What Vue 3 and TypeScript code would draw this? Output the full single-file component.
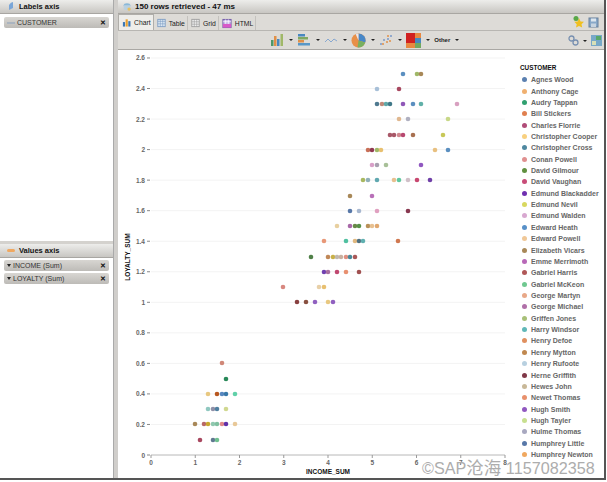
<script setup lang="ts">
type D = [number, string]
const rows: [number, D[]][] = [
  [74, [[403,'#5b8fc0'],[417,'#a0b868'],[421,'#a88858']]],
  [89, [[377,'#a8c0d8'],[399,'#a84860']]],
  [104, [[377,'#4f7a90'],[382,'#c08878'],[386,'#60a8a8'],[390,'#407888'],[403,'#9058b8'],[413,'#5b8fc0'],[421,'#60b0a8'],[457,'#d8a0c0']]],
  [119, [[399,'#e0b890'],[408,'#b0b0c0'],[448,'#c8d888']]],
  [135, [[390,'#a85868'],[394,'#a85868'],[399,'#d08890'],[403,'#b84870'],[413,'#a87050'],[443,'#c8c858']]],
  [150, [[368,'#c87058'],[372,'#903850'],[377,'#a0b868'],[381,'#e8c070'],[435,'#e8c080'],[448,'#5b8fc0']]],
  [165, [[372,'#d8a0c8'],[377,'#a8a0b0'],[386,'#a8c098'],[421,'#9058c0']]],
  [180, [[363,'#a8b860'],[368,'#90b0b8'],[377,'#60a8b0'],[394,'#e8c090'],[399,'#60c8a0'],[408,'#d0c0c8'],[417,'#c84870'],[430,'#7040a8']]],
  [196, [[350,'#a88858'],[372,'#b870b8']]],
  [211, [[350,'#5878a8'],[359,'#a8b8d0'],[377,'#e0a0c0'],[408,'#883850']]],
  [226, [[337,'#e8d0a0'],[350,'#a868a8'],[355,'#688848'],[359,'#589048'],[368,'#b89058'],[372,'#e8c090'],[377,'#e0a870']]],
  [241, [[324,'#e89878'],[346,'#50c0a0'],[355,'#e0b880'],[359,'#507080'],[363,'#60b0b0'],[398,'#d07850']]],
  [257, [[311,'#508048'],[328,'#c08858'],[333,'#c8b048'],[337,'#c0b8b0'],[341,'#c8b0a0'],[346,'#e09080'],[350,'#488898'],[355,'#a85858']]],
  [272, [[324,'#7040b0'],[328,'#a870a0'],[337,'#c04870'],[346,'#e89070'],[359,'#a05050']]],
  [287, [[283,'#d88880'],[319,'#e8d0a8'],[324,'#e8c070']]],
  [302, [[297,'#884040'],[306,'#885040'],[315,'#9060c0'],[328,'#e8c880'],[333,'#9060c0']]],
  [363, [[222,'#d08878']]],
  [379, [[226,'#288858']]],
  [394, [[208,'#e8c880'],[217,'#b85820'],[222,'#5888c0'],[226,'#3878a8'],[235,'#60d0a8']]],
  [409, [[208,'#90c8c0'],[213,'#9090a8'],[217,'#5080a0'],[226,'#d0d890']]],
  [424, [[195,'#a88858'],[204,'#b86868'],[208,'#c8a830'],[213,'#90c8b0'],[217,'#80c0a0'],[222,'#e08888'],[226,'#6030a8'],[235,'#e8c898']]],
  [440, [[200,'#a84860'],[213,'#607890'],[217,'#70c090']]],
]
const dots = rows.flatMap(([y, ds]) => ds.map(([x, c]) => ({ x, y, c })))
const yTicks = Array.from({ length: 13 }, (_, i) => {
  const v = (13 - i) * 0.2
  const t = v.toFixed(1).replace(/\.0$/, '')
  return { t, y: 455 - (13 - i) * 30.54 }
})
const xTicks = [0, 1, 2, 3, 4, 5, 6, 7, 8].map((v) => ({ t: String(v), x: 151 + v * 44.25 }))
const legend: [string, string][] = [
  ['Agnes Wood','#5b80b0'],['Anthony Cage','#f0b070'],['Audry Tappan','#30a070'],['Bill Stickers','#e08050'],
  ['Charles Florrie','#b04c78'],['Christopher Cooper','#f8d080'],['Christopher Cross','#4f88a0'],['Conan Powell','#e09090'],
  ['David Gilmour','#609040'],['David Vaughan','#c84c78'],['Edmund Blackadder','#7030b0'],['Edmund Nevil','#d8d860'],
  ['Edmund Walden','#d8a8d0'],['Edward Heath','#5890c8'],['Edward Powell','#f0c898'],['Elizabeth Vicars','#a88858'],
  ['Emme Merrimoth','#b868b8'],['Gabriel Harris','#b05858'],['Gabriel McKeon','#70c890'],['George Martyn','#e8a888'],
  ['George Michael','#b070a8'],['Griffen Jones','#a8c078'],['Harry Windsor','#60b8b8'],['Henry Defoe','#e09060'],
  ['Henry Mytton','#c08850'],['Henry Rufoote','#b8d0e0'],['Herne Griffith','#803848'],['Hewes John','#c8b898'],
  ['Newet Thomas','#e8906c'],['Hugh Smith','#9058c0'],['Hugh Tayler','#c8e090'],['Hulme Thomas','#a8a8c0'],
  ['Humphrey Little','#5878a8'],['Humphrey Newton','#f0a860'],
]
</script>

<template>
  <div class="root">
    <div class="window">
      <aside class="left">
        <section class="labels">
          <header class="phead">
            <svg width="10" height="12" viewBox="0 0 10 12"><path d="M3 9 L3 4 Q5 1 7 1 L7 7 Q5 8 3 9Z" fill="#7aa6d8" /></svg>
            <b>Labels axis</b>
          </header>
          <div class="chip"><span class="dash"></span><span class="chiptext">CUSTOMER</span><span class="x">✕</span></div>
        </section>
        <div class="hsplit"></div>
        <section class="values">
          <header class="phead">
            <svg width="10" height="12" viewBox="0 0 10 12"><rect x="1" y="4" width="8" height="3" rx="1.5" fill="#f0a860" /></svg>
            <b>Values axis</b>
          </header>
          <div class="chip"><span class="tri"></span><span class="chiptext">INCOME (Sum)</span><span class="x">✕</span></div>
          <div class="chip"><span class="tri"></span><span class="chiptext">LOYALTY (Sum)</span><span class="x">✕</span></div>
        </section>
      </aside>
      <div class="vsplit"></div>
      <main class="right">
        <header class="phead rhead">
          <svg width="10" height="12" viewBox="0 0 12 12"><ellipse cx="6" cy="4" rx="4" ry="2.4" fill="#8ab8d8" /><path d="M2 4v4c0 2 8 2 8 0V4" fill="#b8d0e0" /><circle cx="8.5" cy="8.5" r="2" fill="#e8c060" /></svg>
          <b>150 rows retrieved - 47 ms</b>
        </header>
        <nav class="tabs">
          <div class="tab active">
            <svg width="9" height="11" viewBox="0 0 10 11"><rect x="1" y="5" width="2.4" height="5" fill="#3a78b8" /><rect x="4" y="2" width="2.4" height="8" fill="#e8a030" /><rect x="7" y="4" width="2.4" height="6" fill="#3a78b8" /></svg>
            Chart
          </div>
          <div class="tab">
            <svg width="9" height="10" viewBox="0 0 11 11"><rect x="1" y="1" width="9" height="9" fill="#dce8f4" stroke="#7898c0" /><path d="M1 3.5h9M4 1v9M7 1v9M1 6.500h9" stroke="#7898c0" stroke-width=".7" /></svg>
            Table
          </div>
          <div class="tab">
            <svg width="9" height="10" viewBox="0 0 11 11"><rect x="1" y="1" width="9" height="9" fill="#eee" stroke="#999" /><path d="M1 4h9M1 7h9M4 1v9M7 1v9" stroke="#999" stroke-width=".7" /></svg>
            Grid
          </div>
          <div class="tab">
            <svg width="10" height="11" viewBox="0 0 11 11"><rect x="1" y="1" width="9" height="9" fill="#c8b8e8" stroke="#7058a8" /><rect x="1" y="6" width="9" height="4" fill="#d858c8" /><path d="M1 3.500h9M4 1v5M7 1v5" stroke="#fff" stroke-width=".7" /></svg>
            HTML
          </div>
          <div class="spacer"></div>
          <svg class="ti" width="13" height="13" viewBox="0 0 13 13"><path d="M7 3l1.600 3.400 3.400.4-2.500 2.400.7 3.300L7 11l-3 1.500.7-3.300L2.300 6.800l3.400-.4z" fill="#f0c020" /><circle cx="4" cy="3.500" r="2.500" fill="#58a848" /></svg>
          <svg class="ti" width="11" height="11" viewBox="0 0 11 11"><rect x="1" y="1" width="9" height="9" fill="#88a8c8" stroke="#68809c" /><rect x="3" y="1.500" width="5" height="3" fill="#dde6ee" /><rect x="3" y="6.500" width="5" height="3.500" fill="#c8d4e0" /></svg>
        </nav>
        <div class="toolbar">
          <div class="chartbtns">
            <svg width="14" height="14" viewBox="0 0 14 14"><rect x="1" y="7" width="2.500" height="6" fill="#4f9868" /><rect x="4" y="3" width="2.500" height="10" fill="#e09048" /><rect x="7" y="6" width="2.500" height="7" fill="#4888c0" /><rect x="10.500" y="1" width="2.500" height="12" fill="#a0b868" /></svg>
            <span class="caret"></span>
            <svg width="14" height="14" viewBox="0 0 14 14"><rect x="1" y="1" width="7" height="2.500" fill="#4888c0" /><rect x="1" y="4" width="10" height="2.500" fill="#80a860" /><rect x="1" y="7" width="6" height="2.500" fill="#e09048" /><rect x="1" y="10" width="12" height="2.500" fill="#5898c8" /></svg>
            <span class="caret"></span>
            <svg width="14" height="14" viewBox="0 0 14 14"><path d="M1 9l3-3 3 3 3-3 3 2" fill="none" stroke="#88a8d0" stroke-width="1" /></svg>
            <span class="caret"></span>
            <svg width="15" height="15" viewBox="0 0 16 16"><circle cx="8" cy="8" r="7.500" fill="#e89048" /><path d="M8 8L8 .5A7.500 7.500 0 0 1 15.200 10.200Z" fill="#4888c8" /><path d="M8 8l7.200 2.200A7.500 7.500 0 0 1 7 15.400Z" fill="#78b060" /><path d="M8 8L5 1.200 8 .5Z" fill="#e8e8f0" /></svg>
            <span class="caret"></span>
            <svg width="14" height="14" viewBox="0 0 14 14"><g fill="#7898c8"><circle cx="2" cy="11" r="1" /><circle cx="5" cy="7" r="1" /><circle cx="9" cy="6" r="1" /><circle cx="12" cy="3" r="1" /></g><g fill="#e09048"><circle cx="4" cy="11" r="1" /><circle cx="8" cy="9" r="1" /><circle cx="11" cy="8" r="1" /><circle cx="9" cy="3" r="1" /></g></svg>
            <span class="caret"></span>
            <svg width="15" height="15" viewBox="0 0 15 15"><rect x="0" y="0" width="9" height="10" fill="#d02020" /><rect x="0" y="10" width="9" height="5" fill="#e88840" /><rect x="9" y="0" width="6" height="5" fill="#e88840" /><rect x="9" y="5" width="6" height="5" fill="#4888c0" /><rect x="9" y="10" width="6" height="5" fill="#70a860" /></svg>
            <span class="caret"></span>
            <span class="other">Other</span>
            <span class="caret"></span>
          </div>
          <div class="toolright">
            <svg width="11" height="11" viewBox="0 0 11 11"><circle cx="3.500" cy="3.500" r="2.500" fill="none" stroke="#7890b0" stroke-width="1.300" /><circle cx="7.500" cy="7.500" r="2.500" fill="none" stroke="#7890b0" stroke-width="1.300" /></svg>
            <span class="caret"></span>
            <svg width="11" height="11" viewBox="0 0 11 11"><rect x="0" y="0" width="11" height="11" fill="#78a8c8" /><rect x="5" y="1" width="5" height="4" fill="#58a868" /><rect x="1" y="6" width="4" height="4" fill="#d8e0b8" /></svg>
          </div>
        </div>
        <div class="chart">
          <svg class="plot" width="400" height="428" viewBox="118 50 400 428">
            <g v-for="t in yTicks" :key="t.t">
              <line x1="151" x2="505" :y1="t.y" :y2="t.y" stroke="#f3f3f3" />
              <line x1="147" x2="150" :y1="t.y" :y2="t.y" stroke="#888" />
              <text x="145" :y="t.y + 2.500" text-anchor="end" class="tick">{{ t.t }}</text>
            </g>
            <line x1="147" x2="150" y1="455" y2="455" stroke="#888" />
            <text x="145" y="457.500" text-anchor="end" class="tick">0</text>
            <line x1="151" x2="505" y1="455" y2="455" stroke="#b8b8b8" />
            <g v-for="t in xTicks" :key="t.t">
              <line :x1="t.x" :x2="t.x" y1="455" y2="458" stroke="#999" />
              <text :x="t.x" y="465" text-anchor="middle" class="tick">{{ t.t }}</text>
            </g>
            <text x="328" y="474" text-anchor="middle" class="axis">INCOME_SUM</text>
            <text transform="translate(130 257) rotate(-90)" text-anchor="middle" class="axis">LOYALTY_SUM</text>
            <circle v-for="(d, i) in dots" :key="i" :cx="d.x" :cy="d.y" r="2.300" :fill="d.c" />
          </svg>
          <div class="legend">
            <div class="ltitle">CUSTOMER</div>
            <div v-for="l in legend" :key="l[0]" class="litem">
              <span class="ldot" :style="{ background: l[1] }"></span>
              <span>{{ l[0] }}</span>
            </div>
          </div>
        </div>
      </main>
    </div>
    <div class="mark">©SAP<span class="cjk">沧海</span> 1157082358</div>
  </div>
</template>

<style scoped>
.root {
  position: relative;
  width: 607px;
  height: 482px;
  background: #fff;
  overflow: hidden;
  font-family: "Liberation Sans", "Noto Sans CJK SC", sans-serif;
  color: #333;
}
.window {
  display: flex;
  width: 606px;
  height: 480px;
  border-right: 2px solid #555;
  border-bottom: 2px solid #555;
  box-sizing: border-box;
  background: #d4d2ce;
}
.left {
  width: 113px;
  display: flex;
  flex-direction: column;
  flex: none;
}
.labels {
  height: 241px;
  background: #fff;
  flex: none;
}
.values {
  flex: 1;
  background: #fff;
}
.hsplit {
  height: 3px;
  background: #d4d2ce;
  flex: none;
}
.vsplit {
  width: 5px;
  flex: none;
  background: #d0cecb;
  border-left: 1px solid #aaa;
  box-sizing: border-box;
}
.phead {
  height: 14px;
  display: flex;
  align-items: center;
  gap: 3px;
  padding-left: 6px;
  box-sizing: border-box;
  background: linear-gradient(#ededeb, #c8c6c2);
  border-bottom: 1px solid #a8a6a2;
  font-size: 7.500px;
  color: #111;
}
.chip {
  display: flex;
  align-items: center;
  height: 11px;
  margin: 2px 4px 0 4px;
  padding: 0 3px 0 3px;
  background: linear-gradient(#d8d6d2, #bdbbb7);
  border-radius: 2px;
  font-size: 7px;
  color: #333;
}
.labels .chip {
  margin-top: 3px;
}
.chiptext {
  flex: 1;
  margin-left: 2px;
}
.dash {
  width: 8px;
  height: 2px;
  background: #aab4c0;
}
.tri {
  width: 0;
  height: 0;
  border-left: 2.500px solid transparent;
  border-right: 2.500px solid transparent;
  border-top: 3px solid #222;
}
.x {
  font-size: 7px;
  font-weight: bold;
  color: #111;
}
.right {
  flex: 1;
  display: flex;
  flex-direction: column;
  min-width: 0;
}
.rhead {
  padding-left: 4px;
  gap: 3px;
  font-size: 8px;
}
.tabs {
  height: 17px;
  display: flex;
  align-items: flex-end;
  padding: 0 2px 0 0;
  background: #dddbd7;
  border-bottom: 1px solid #b8b6b2;
  box-sizing: border-box;
  flex: none;
}
.tab {
  height: 14px;
  display: flex;
  align-items: center;
  gap: 3px;
  padding: 0 2px 0 3px;
  font-size: 6.800px;
  color: #222;
  border-right: 1px solid #c4c2be;
}
.tab.active {
  background: #eeedea;
  height: 16px;
  border: 1px solid #b0aeaa;
  border-bottom: 0;
  box-sizing: border-box;
}
.spacer {
  flex: 1;
}
.ti {
  margin: 0 3px 2px 0;
}
.toolbar {
  height: 19px;
  flex: none;
  position: relative;
  display: flex;
  align-items: center;
  justify-content: center;
  background: #dddbd7;
  border-bottom: 1px solid #aaa8a4;
  box-sizing: border-box;
}
.chartbtns {
  display: flex;
  align-items: center;
  gap: 4.500px;
  margin-left: 7px;
}
.toolright {
  position: absolute;
  right: 2px;
  top: 4px;
  display: flex;
  align-items: center;
  gap: 4px;
}
.caret {
  width: 0;
  height: 0;
  border-left: 2px solid transparent;
  border-right: 2px solid transparent;
  border-top: 2.500px solid #222;
}
.other {
  font-size: 6px;
  font-weight: bold;
  color: #222;
}
.chart {
  flex: 1;
  display: flex;
  background: #fff;
  min-height: 0;
}
.plot {
  flex: none;
  display: block;
}
.tick {
  font: bold 6.500px "Liberation Sans", sans-serif;
  fill: #666;
}
.axis {
  font: bold 6.500px "Liberation Sans", sans-serif;
  fill: #111;
}
.legend {
  padding: 12px 0 0 2px;
  font-size: 7px;
  font-weight: bold;
  color: #666;
}
.ltitle {
  height: 12px;
  line-height: 12px;
  color: #111;
  font-size: 6.400px;
}
.litem {
  height: 11.360px;
  display: flex;
  align-items: center;
  gap: 4px;
  white-space: nowrap;
  padding-left: 2px;
}
.ldot {
  width: 5px;
  height: 5px;
  border-radius: 50%;
  flex: none;
}
.mark {
  position: absolute;
  left: 422px;
  top: 457px;
  font-size: 16.200px;
  line-height: 22px;
  color: #adadad;
  white-space: nowrap;
  font-family: "Liberation Sans", "Noto Sans CJK SC", sans-serif;
}
.cjk {
  font-size: 17.500px;
}
</style>
